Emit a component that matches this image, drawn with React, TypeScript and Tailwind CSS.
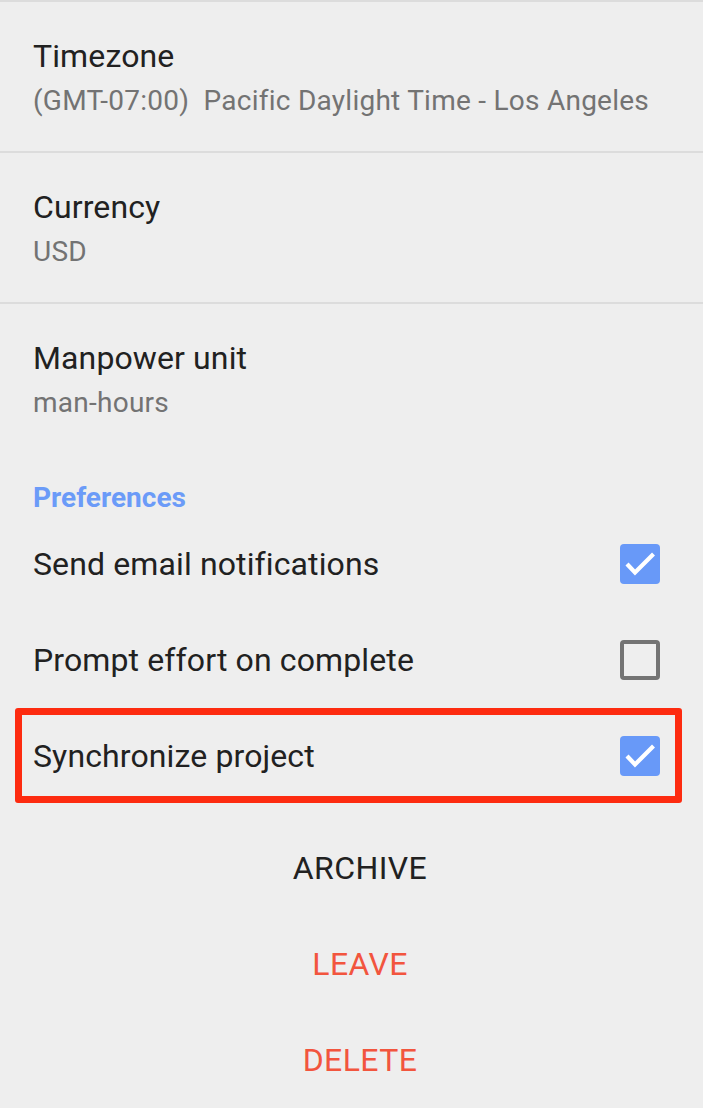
import { useState } from 'react'

type Detail = {
  title: string
  value: string
}

const details: Detail[] = [
  { title: 'Timezone', value: '(GMT-07:00)  Pacific Daylight Time - Los Angeles' },
  { title: 'Currency', value: 'USD' },
  { title: 'Manpower unit', value: 'man-hours' },
]

function CheckBox({ checked, onClick }: { checked: boolean; onClick: () => void }) {
  if (!checked) {
    return (
      <button
        onClick={onClick}
        className="w-[40px] h-[40px] rounded-[4px] border-[4px] border-[#737373] bg-transparent"
      />
    )
  }
  return (
    <button
      onClick={onClick}
      className="w-[40px] h-[40px] rounded-[4px] bg-[#6899f8] flex items-center justify-center"
    >
      <svg width="40" height="40" viewBox="0 0 40 40" fill="none">
        <path d="M7 20 L15 28.5 L33.5 10" stroke="#ffffff" strokeWidth="4.2" />
      </svg>
    </button>
  )
}

export default function App() {
  const [prefs, setPrefs] = useState({ email: true, effort: false, sync: true })

  const toggle = (key: keyof typeof prefs) =>
    setPrefs((p) => ({ ...p, [key]: !p[key] }))

  return (
    <div className="w-[703px] h-[1108px] bg-[#eeeeee] overflow-hidden font-['Roboto',sans-serif]">
      {/* DETAIL ROWS */}
      {details.map((d, i) => (
        <div
          key={d.title}
          className={`border-t-2 border-[#dcdcdc] px-[33px] pt-[35px] ${i < 2 ? 'pb-[34px]' : 'pb-0'}`}
        >
          <div className="text-[32px] leading-[38px] tracking-[0.12px] text-[#212121]">{d.title}</div>
          <div className="mt-[9px] text-[28px] leading-[33px] tracking-[0.25px] text-[#737373] whitespace-pre">{d.value}</div>
        </div>
      ))}

      {/* PREFERENCES */}
      <div className="mt-[62px] px-[33px] text-[28px] leading-[33px] font-bold text-[#6b9bf8]">
        Preferences
      </div>

      <div className="mt-[2px]">
        <div className="h-[96px] flex items-center justify-between pl-[33px] pr-[43px]">
          <span className="text-[32px] leading-[38px] tracking-[0.12px] text-[#212121]">Send email notifications</span>
          <CheckBox checked={prefs.email} onClick={() => toggle('email')} />
        </div>
        <div className="h-[96px] flex items-center justify-between pl-[33px] pr-[43px]">
          <span className="text-[32px] leading-[38px] tracking-[0.12px] text-[#212121]">Prompt effort on complete</span>
          <CheckBox checked={prefs.effort} onClick={() => toggle('effort')} />
        </div>
        <div className="relative h-[96px] flex items-center justify-between pl-[33px] pr-[43px]">
          <span className="text-[32px] leading-[38px] tracking-[0.12px] text-[#212121]">Synchronize project</span>
          <CheckBox checked={prefs.sync} onClick={() => toggle('sync')} />
          {/* highlight box */}
          <div className="absolute left-[15px] right-[21px] top-0 bottom-[1px] border-[7px] border-[#fd2b10] rounded-[3px] pointer-events-none" />
        </div>
      </div>

      {/* ACTIONS */}
      <div className="mt-[16px] pl-[17px]">
        <button className="w-full h-[96px] flex items-center justify-center text-[32px] leading-[38px] tracking-[0.4px] text-[#212121]">
          ARCHIVE
        </button>
        <button className="w-full h-[96px] flex items-center justify-center text-[32px] leading-[38px] tracking-[0.4px] text-[#f2553e]">
          LEAVE
        </button>
        <button className="w-full h-[96px] flex items-center justify-center text-[32px] leading-[38px] tracking-[0.4px] text-[#f2553e]">
          DELETE
        </button>
      </div>
    </div>
  )
}
